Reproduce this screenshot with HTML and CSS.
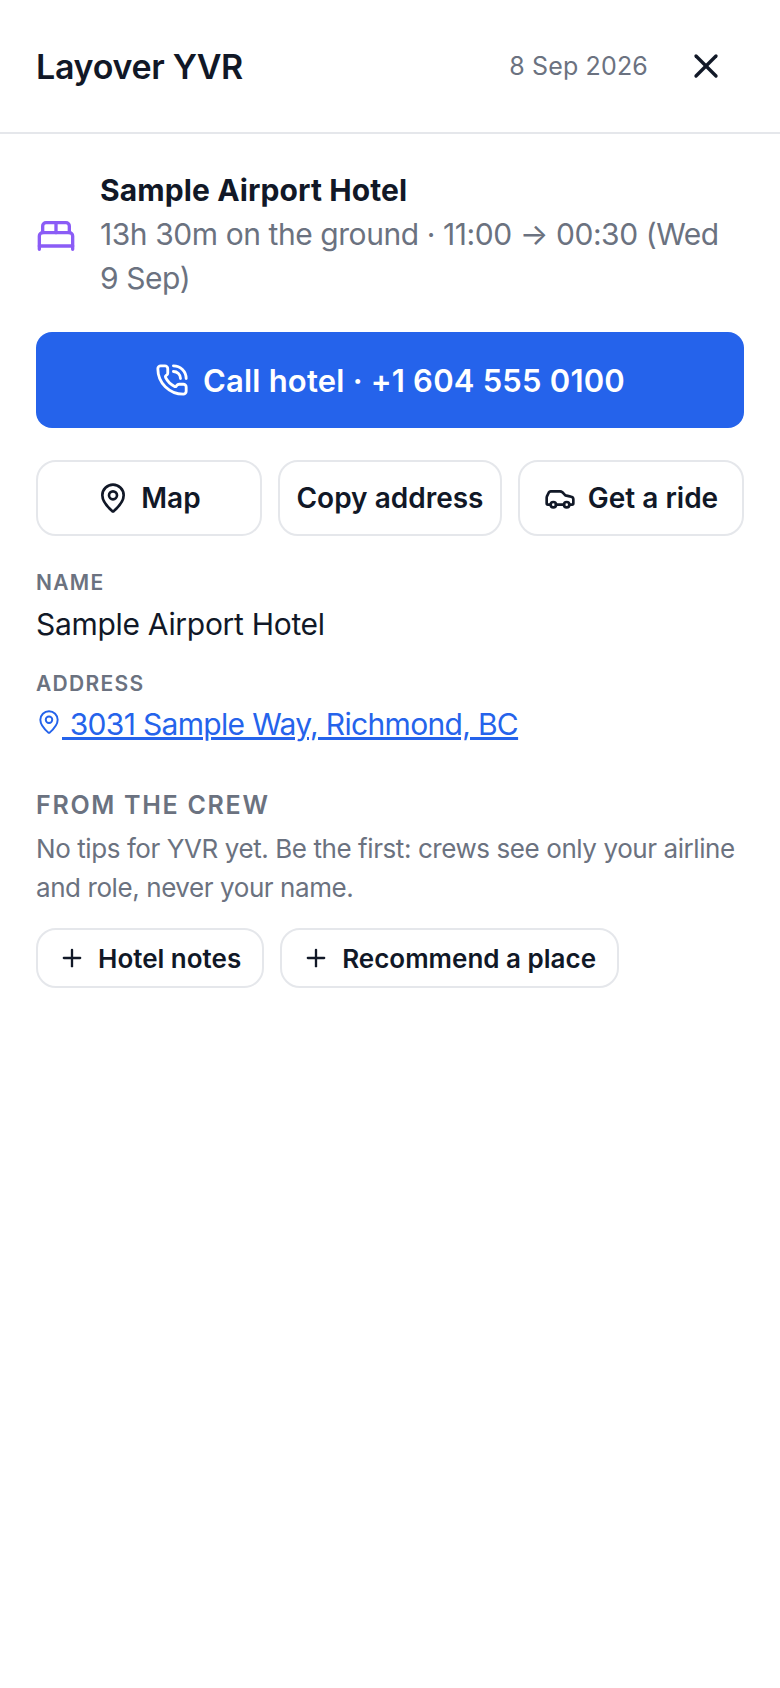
FILE: index.html
```html
<!DOCTYPE html>
<html lang="en">

<head>
    <meta charset="UTF-8">
    <meta name="viewport" content="width=device-width, initial-scale=1.0">
    <title>Layover YVR</title>
    <link rel="stylesheet" href="styles.css">
</head>

<body>
    <header class="header">
        <h1 class="title">Layover YVR</h1>
        <span class="date">8 Sep 2026</span>
        <button class="close" aria-label="Close">
            <svg class="icon-close" viewBox="0 0 24 24">
                <path d="M18 6 6 18" />
                <path d="m6 6 12 12" />
            </svg>
        </button>
    </header>

    <main class="content">
        <section class="stay">
            <svg class="icon-bed" viewBox="0 0 24 24">
                <path d="M2 20v-8a2 2 0 0 1 2-2h16a2 2 0 0 1 2 2v8" />
                <path d="M4 10V6a2 2 0 0 1 2-2h12a2 2 0 0 1 2 2v4" />
                <path d="M12 4v6" />
                <path d="M2 18h20" />
            </svg>
            <div class="stay-text">
                <div class="stay-name">Sample Airport Hotel</div>
                <div class="stay-sub">13h 30m on the ground · 11:00 → 00:30 (Wed 9 Sep)</div>
            </div>
        </section>

        <button class="call">
            <svg class="icon-phone" viewBox="0 0 24 24">
                <path d="M13 2a9 9 0 0 1 9 9" />
                <path d="M13 6a5 5 0 0 1 5 5" />
                <path d="M13.832 16.568a1 1 0 0 0 1.213-.303l.355-.465A2 2 0 0 1 17 15h3a2 2 0 0 1 2 2v3a2 2 0 0 1-2 2A18 18 0 0 1 2 4a2 2 0 0 1 2-2h3a2 2 0 0 1 2 2v3a2 2 0 0 1-.8 1.6l-.468.351a1 1 0 0 0-.292 1.233 14 14 0 0 0 6.392 6.384" />
            </svg>
            Call hotel · +1 604 555 0100
        </button>

        <div class="actions">
            <button class="action action-map">
                <svg class="icon" viewBox="0 0 24 24">
                    <path d="M20 10c0 4.993-5.539 10.193-7.399 11.799a1 1 0 0 1-1.202 0C9.539 20.193 4 14.993 4 10a8 8 0 0 1 16 0" />
                    <circle cx="12" cy="10" r="3" />
                </svg>
                Map
            </button>
            <button class="action action-copy">Copy address</button>
            <button class="action action-ride">
                <svg class="icon" viewBox="0 0 24 24">
                    <path d="M19 17h2c.6 0 1-.4 1-1v-3c0-.9-.7-1.7-1.5-1.9C18.7 10.6 16 10 16 10s-1.3-1.4-2.2-2.3c-.5-.4-1.1-.7-1.8-.7H5c-.6 0-1.1.4-1.4.9l-1.4 2.9A3.7 3.7 0 0 0 2 12v4c0 .6.4 1 1 1h2" />
                    <circle cx="7" cy="17" r="2" />
                    <path d="M9 17h6" />
                    <circle cx="17" cy="17" r="2" />
                </svg>
                Get a ride
            </button>
        </div>

        <div class="field">
            <div class="field-label">NAME</div>
            <div class="field-value">Sample Airport Hotel</div>
        </div>
        <div class="field field-address">
            <div class="field-label">ADDRESS</div>
            <a class="field-link" href="#">
                <svg class="icon-pin" viewBox="0 0 24 24">
                    <path d="M20 10c0 4.993-5.539 10.193-7.399 11.799a1 1 0 0 1-1.202 0C9.539 20.193 4 14.993 4 10a8 8 0 0 1 16 0" />
                    <circle cx="12" cy="10" r="3" />
                </svg>
                3031 Sample Way, Richmond, BC</a>
        </div>

        <section class="crew">
            <h2 class="crew-title">FROM THE CREW</h2>
            <p class="crew-text">No tips for YVR yet. Be the first: crews see only your airline and role, never your name.</p>
            <div class="crew-buttons">
                <button class="add">
                    <svg class="icon-plus" viewBox="0 0 24 24">
                        <path d="M5 12h14" />
                        <path d="M12 5v14" />
                    </svg>
                    Hotel notes
                </button>
                <button class="add">
                    <svg class="icon-plus" viewBox="0 0 24 24">
                        <path d="M5 12h14" />
                        <path d="M12 5v14" />
                    </svg>
                    Recommend a place
                </button>
            </div>
        </section>
    </main>
</body>

</html>
```

FILE: styles.css
```css
* {
    box-sizing: border-box;
}

body {
    margin: 0;
    background: #fff;
    color: #111827;
    font-family: Inter, "Noto Sans", sans-serif;
}

svg {
    fill: none;
    stroke: currentColor;
    stroke-width: 2;
    stroke-linecap: round;
    stroke-linejoin: round;
    flex-shrink: 0;
}

button {
    font-family: inherit;
    color: inherit;
    background: none;
    cursor: pointer;
}

.header {
    display: flex;
    align-items: center;
    height: 134px;
    padding: 0 54px 0 36px;
    border-bottom: 2px solid #e5e7eb;
}

.title {
    margin: 0;
    font-size: 34px;
    font-weight: 600;
    letter-spacing: -0.3px;
}

.date {
    margin-left: auto;
    font-size: 25px;
    letter-spacing: 0.15px;
    color: #6b7280;
}

.close {
    display: flex;
    margin-left: 38px;
    padding: 0;
    border: 0;
}

.icon-close {
    width: 40px;
    height: 40px;
}

.content {
    padding: 34px 36px;
}

.stay {
    display: flex;
    align-items: center;
    gap: 24px;
}

.icon-bed {
    width: 40px;
    height: 40px;
    margin-top: 4px;
    color: #8b5cf6;
}

.stay-text {
    padding-right: 8px;
}

.stay-name {
    font-size: 30px;
    line-height: 44px;
    font-weight: 700;
    letter-spacing: 0.1px;
}

.stay-sub {
    font-size: 30px;
    line-height: 44px;
    color: #6b7280;
    letter-spacing: -0.43px;
}

.call {
    display: flex;
    align-items: center;
    justify-content: center;
    gap: 14px;
    width: 100%;
    height: 96px;
    margin-top: 32px;
    border: 0;
    border-radius: 16px;
    background: #2563eb;
    color: #fff;
    font-size: 31px;
    font-weight: 600;
    letter-spacing: 0.2px;
}

.icon-phone {
    width: 34px;
    height: 34px;
}

.icon {
    width: 32px;
    height: 32px;
}

.actions {
    display: grid;
    grid-template-columns: 226px 224px 226px;
    gap: 16px;
    margin-top: 32px;
}

.action {
    display: flex;
    align-items: center;
    justify-content: center;
    gap: 12px;
    height: 76px;
    padding: 0;
    border: 2px solid #e5e7eb;
    border-radius: 20px;
    font-size: 28px;
    font-weight: 600;
}

.field {
    margin-top: 31px;
}

.field-address {
    margin-top: 22px;
}

.field-label {
    font-size: 21px;
    line-height: 32px;
    font-weight: 600;
    letter-spacing: 1.3px;
    color: #6b7280;
}

.field-value,
.field-link {
    display: block;
    font-size: 30px;
    line-height: 44px;
    letter-spacing: -0.3px;
}

.field-value {
    margin-top: 3px;
}

.field-link {
    margin-top: 2px;
    color: #2563eb;
    letter-spacing: -0.68px;
}

.icon-pin {
    width: 26px;
    height: 26px;
    stroke-width: 1.8;
}

.crew {
    margin-top: 41px;
}

.crew-title {
    margin: 0;
    font-size: 25px;
    line-height: 36px;
    font-weight: 600;
    letter-spacing: 1.7px;
    color: #6b7280;
}

.crew-text {
    margin: 6px 0 0;
    font-size: 26px;
    line-height: 39px;
    letter-spacing: -0.42px;
    color: #6b7280;
}

.crew-buttons {
    display: flex;
    gap: 16px;
    margin-top: 21px;
}

.add {
    display: flex;
    align-items: center;
    gap: 12px;
    height: 60px;
    padding: 0 21px 0 20px;
    border: 2px solid #e5e7eb;
    border-radius: 20px;
    font-size: 26px;
    font-weight: 600;
}

.icon-plus {
    width: 28px;
    height: 28px;
}
```
